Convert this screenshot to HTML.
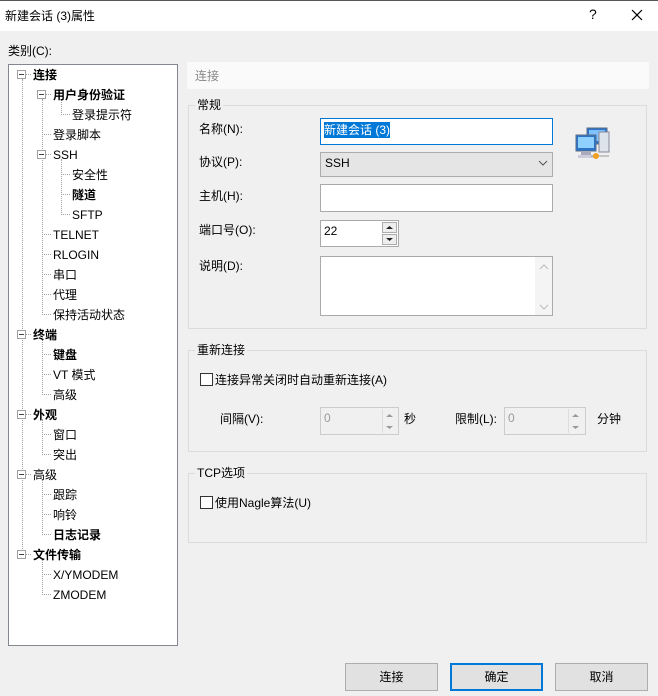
<!DOCTYPE html>
<html><head><meta charset="utf-8"><style>
*{box-sizing:border-box;margin:0;padding:0}
body{width:658px;height:696px;background:#f0f0f0;font-family:"Liberation Sans","Noto Sans CJK SC",sans-serif;font-size:12px;color:#000;position:relative;overflow:hidden}
.a{position:absolute;white-space:nowrap}
.t{position:absolute;white-space:nowrap;line-height:16px;height:16px;margin-top:1px}
.b{font-weight:bold}
.vl{position:absolute;border-left:1px dotted #a0a0a0;width:0}
.hl{position:absolute;border-top:1px dotted #a0a0a0;height:0}
.ex{position:absolute;width:9px;height:9px;border:1px solid #a0a0a0;background:#fff}
.ex:after{content:"";position:absolute;left:1px;top:3px;width:5px;height:1px;background:#444}
.grp{position:absolute;border:1px solid #dcdcdc}
.gl{position:absolute;background:#f0f0f0;padding:0 2px;line-height:16px}
.inp{position:absolute;background:#fff;border:1px solid #7a7a7a}
.btn{position:absolute;width:93px;height:28px;background:#e1e1e1;border:1px solid #adadad;text-align:center;line-height:26px}
.cb{position:absolute;width:13px;height:13px;border:1px solid #333;background:#fff}
</style></head><body>
<div class="a" style="left:0;top:0;width:658px;height:31px;background:#fff;border-top:1px solid #555"></div>
<div class="a" style="left:5px;top:7px">新建会话 (3)属性</div>
<div class="a" style="left:589px;top:6px;font-size:14px">?</div>
<svg class="a" style="left:631px;top:9px" width="12" height="12"><path d="M1 1L11 11M11 1L1 11" stroke="#000" stroke-width="1.2"/></svg>
<div class="a" style="left:8px;top:42px">类别(C):</div>

<div class="a" style="left:8px;top:64px;width:170px;height:582px;background:#fff;border:1px solid #828790"></div>
<div class="vl" style="left:22px;top:79px;height:476px"></div>
<div class="vl" style="left:42px;top:99px;height:216px"></div>
<div class="vl" style="left:61px;top:99px;height:16px"></div>
<div class="vl" style="left:61px;top:159px;height:56px"></div>
<div class="vl" style="left:42px;top:339px;height:56px"></div>
<div class="vl" style="left:42px;top:419px;height:36px"></div>
<div class="vl" style="left:42px;top:479px;height:56px"></div>
<div class="vl" style="left:42px;top:559px;height:36px"></div>

<div class="hl" style="left:22px;top:74px;width:9px"></div>
<div class="hl" style="left:42px;top:94px;width:9px"></div><div class="hl" style="left:61px;top:114px;width:9px"></div>
<div class="hl" style="left:42px;top:134px;width:9px"></div><div class="hl" style="left:42px;top:154px;width:9px"></div>
<div class="hl" style="left:61px;top:174px;width:9px"></div><div class="hl" style="left:61px;top:194px;width:9px"></div><div class="hl" style="left:61px;top:214px;width:9px"></div>
<div class="hl" style="left:42px;top:234px;width:9px"></div><div class="hl" style="left:42px;top:254px;width:9px"></div><div class="hl" style="left:42px;top:274px;width:9px"></div><div class="hl" style="left:42px;top:294px;width:9px"></div><div class="hl" style="left:42px;top:314px;width:9px"></div>
<div class="hl" style="left:22px;top:334px;width:9px"></div>
<div class="hl" style="left:42px;top:354px;width:9px"></div><div class="hl" style="left:42px;top:374px;width:9px"></div><div class="hl" style="left:42px;top:394px;width:9px"></div>
<div class="hl" style="left:22px;top:414px;width:9px"></div>
<div class="hl" style="left:42px;top:434px;width:9px"></div><div class="hl" style="left:42px;top:454px;width:9px"></div>
<div class="hl" style="left:22px;top:474px;width:9px"></div>
<div class="hl" style="left:42px;top:494px;width:9px"></div><div class="hl" style="left:42px;top:514px;width:9px"></div><div class="hl" style="left:42px;top:534px;width:9px"></div>
<div class="hl" style="left:22px;top:554px;width:9px"></div>
<div class="hl" style="left:42px;top:574px;width:9px"></div><div class="hl" style="left:42px;top:594px;width:9px"></div>

<div class="ex" style="left:17px;top:70px"></div>
<div class="ex" style="left:37px;top:90px"></div>
<div class="ex" style="left:37px;top:150px"></div>
<div class="ex" style="left:17px;top:330px"></div>
<div class="ex" style="left:17px;top:410px"></div>
<div class="ex" style="left:17px;top:470px"></div>
<div class="ex" style="left:17px;top:550px"></div>

<div class="t b" style="left:33px;top:66px">连接</div>
<div class="t b" style="left:53px;top:86px">用户身份验证</div>
<div class="t" style="left:72px;top:106px">登录提示符</div>
<div class="t" style="left:53px;top:126px">登录脚本</div>
<div class="t" style="left:53px;top:146px">SSH</div>
<div class="t" style="left:72px;top:166px">安全性</div>
<div class="t b" style="left:72px;top:186px">隧道</div>
<div class="t" style="left:72px;top:206px">SFTP</div>
<div class="t" style="left:53px;top:226px">TELNET</div>
<div class="t" style="left:53px;top:246px">RLOGIN</div>
<div class="t" style="left:53px;top:266px">串口</div>
<div class="t" style="left:53px;top:286px">代理</div>
<div class="t" style="left:53px;top:306px">保持活动状态</div>
<div class="t b" style="left:33px;top:326px">终端</div>
<div class="t b" style="left:53px;top:346px">键盘</div>
<div class="t" style="left:53px;top:366px">VT 模式</div>
<div class="t" style="left:53px;top:386px">高级</div>
<div class="t b" style="left:33px;top:406px">外观</div>
<div class="t" style="left:53px;top:426px">窗口</div>
<div class="t" style="left:53px;top:446px">突出</div>
<div class="t" style="left:33px;top:466px">高级</div>
<div class="t" style="left:53px;top:486px">跟踪</div>
<div class="t" style="left:53px;top:506px">响铃</div>
<div class="t b" style="left:53px;top:526px">日志记录</div>
<div class="t b" style="left:33px;top:546px">文件传输</div>
<div class="t" style="left:53px;top:566px">X/YMODEM</div>
<div class="t" style="left:53px;top:586px">ZMODEM</div>

<div class="a" style="left:187px;top:62px;width:462px;height:27px;background:#fafafa"></div>
<div class="a" style="left:195px;top:67px;color:#888">连接</div>

<div class="grp" style="left:188px;top:105px;width:459px;height:224px"></div>
<div class="gl" style="left:195px;top:97px">常规</div>
<div class="a" style="left:199px;top:120px">名称(N):</div>
<div class="inp" style="left:320px;top:118px;width:233px;height:27px;border-color:#0078d7"></div>
<div class="a" style="left:324px;top:122px;background:#0078d7;color:#fff;line-height:16px">新建会话 (3)</div>
<div class="a" style="left:199px;top:153px">协议(P):</div>
<div class="a" style="left:320px;top:152px;width:233px;height:25px;background:#e5e5e5;border:1px solid #adadad"></div>
<div class="a" style="left:325px;top:156px">SSH</div>
<svg class="a" style="left:538px;top:160px" width="10" height="6"><path d="M1 1L5 5L9 1" stroke="#555" fill="none"/></svg>
<div class="a" style="left:199px;top:187px">主机(H):</div>
<div class="inp" style="left:320px;top:184px;width:233px;height:28px;border-color:#aaa"></div>
<div class="a" style="left:199px;top:221px">端口号(O):</div>
<div class="inp" style="left:320px;top:220px;width:79px;height:27px;border-color:#aaa"></div>
<div class="a" style="left:324px;top:224px">22</div>
<div class="a" style="left:382px;top:222px;width:15px;height:11px;border:1px solid #adadad;background:#eee"></div>
<div class="a" style="left:382px;top:234px;width:15px;height:11px;border:1px solid #adadad;background:#eee"></div>
<svg class="a" style="left:386px;top:225px" width="7" height="18"><path d="M0 4L3.5 1L7 4Z M0 13L7 13L3.5 16Z" fill="#222"/></svg>
<div class="a" style="left:199px;top:257px">说明(D):</div>
<div class="inp" style="left:320px;top:256px;width:233px;height:60px;border-color:#aaa"></div>
<div class="a" style="left:535px;top:257px;width:17px;height:58px;background:#f4f4f4"></div>
<svg class="a" style="left:539px;top:264px" width="10" height="46"><path d="M1 5L5 1L9 5M1 41L5 45L9 41" stroke="#bbb" fill="none"/></svg>
<svg class="a" style="left:575px;top:127px" width="36" height="34">
<rect x="12" y="1" width="20" height="16" fill="#2c74c8" stroke="#5a6d85"/><rect x="14" y="3" width="16" height="11" fill="#7fc1ff"/>
<rect x="24" y="5" width="10" height="20" fill="#dde3ea" stroke="#889"/>
<rect x="1" y="8" width="20" height="16" fill="#2c74c8" stroke="#5a6d85"/><rect x="3" y="10" width="16" height="11" fill="#8fd0ff"/>
<rect x="6" y="25" width="10" height="3" fill="#aab"/><rect x="3" y="28" width="16" height="3" fill="#ccd"/>
<path d="M16 29H34" stroke="#999"/><circle cx="21" cy="29" r="3" fill="#f0a020"/></svg>

<div class="grp" style="left:188px;top:350px;width:459px;height:102px"></div>
<div class="gl" style="left:195px;top:342px">重新连接</div>
<div class="cb" style="left:200px;top:373px"></div>
<div class="a" style="left:215px;top:371px">连接异常关闭时自动重新连接(A)</div>
<div class="a" style="left:220px;top:410px">间隔(V):</div>
<div class="a" style="left:320px;top:407px;width:79px;height:28px;border:1px solid #ccc"></div>
<div class="a" style="left:324px;top:411px;color:#999">0</div>
<div class="a" style="left:382px;top:409px;width:15px;height:24px;border-left:1px solid #ddd"></div>
<svg class="a" style="left:386px;top:413px" width="7" height="18"><path d="M0 4L3.5 1L7 4Z M0 13L7 13L3.5 16Z" fill="#999"/></svg>
<div class="a" style="left:404px;top:410px">秒</div>
<div class="a" style="left:455px;top:410px">限制(L):</div>
<div class="a" style="left:504px;top:407px;width:82px;height:28px;border:1px solid #ccc"></div>
<div class="a" style="left:508px;top:411px;color:#999">0</div>
<div class="a" style="left:568px;top:409px;width:15px;height:24px;border-left:1px solid #ddd"></div>
<svg class="a" style="left:572px;top:413px" width="7" height="18"><path d="M0 4L3.5 1L7 4Z M0 13L7 13L3.5 16Z" fill="#999"/></svg>
<div class="a" style="left:597px;top:410px">分钟</div>

<div class="grp" style="left:188px;top:473px;width:459px;height:70px"></div>
<div class="gl" style="left:195px;top:465px">TCP选项</div>
<div class="cb" style="left:200px;top:496px"></div>
<div class="a" style="left:215px;top:494px">使用Nagle算法(U)</div>

<div class="btn" style="left:345px;top:663px">连接</div>
<div class="btn" style="left:450px;top:663px;border:2px solid #0078d7;line-height:24px">确定</div>
<div class="btn" style="left:555px;top:663px">取消</div>
</body></html>
